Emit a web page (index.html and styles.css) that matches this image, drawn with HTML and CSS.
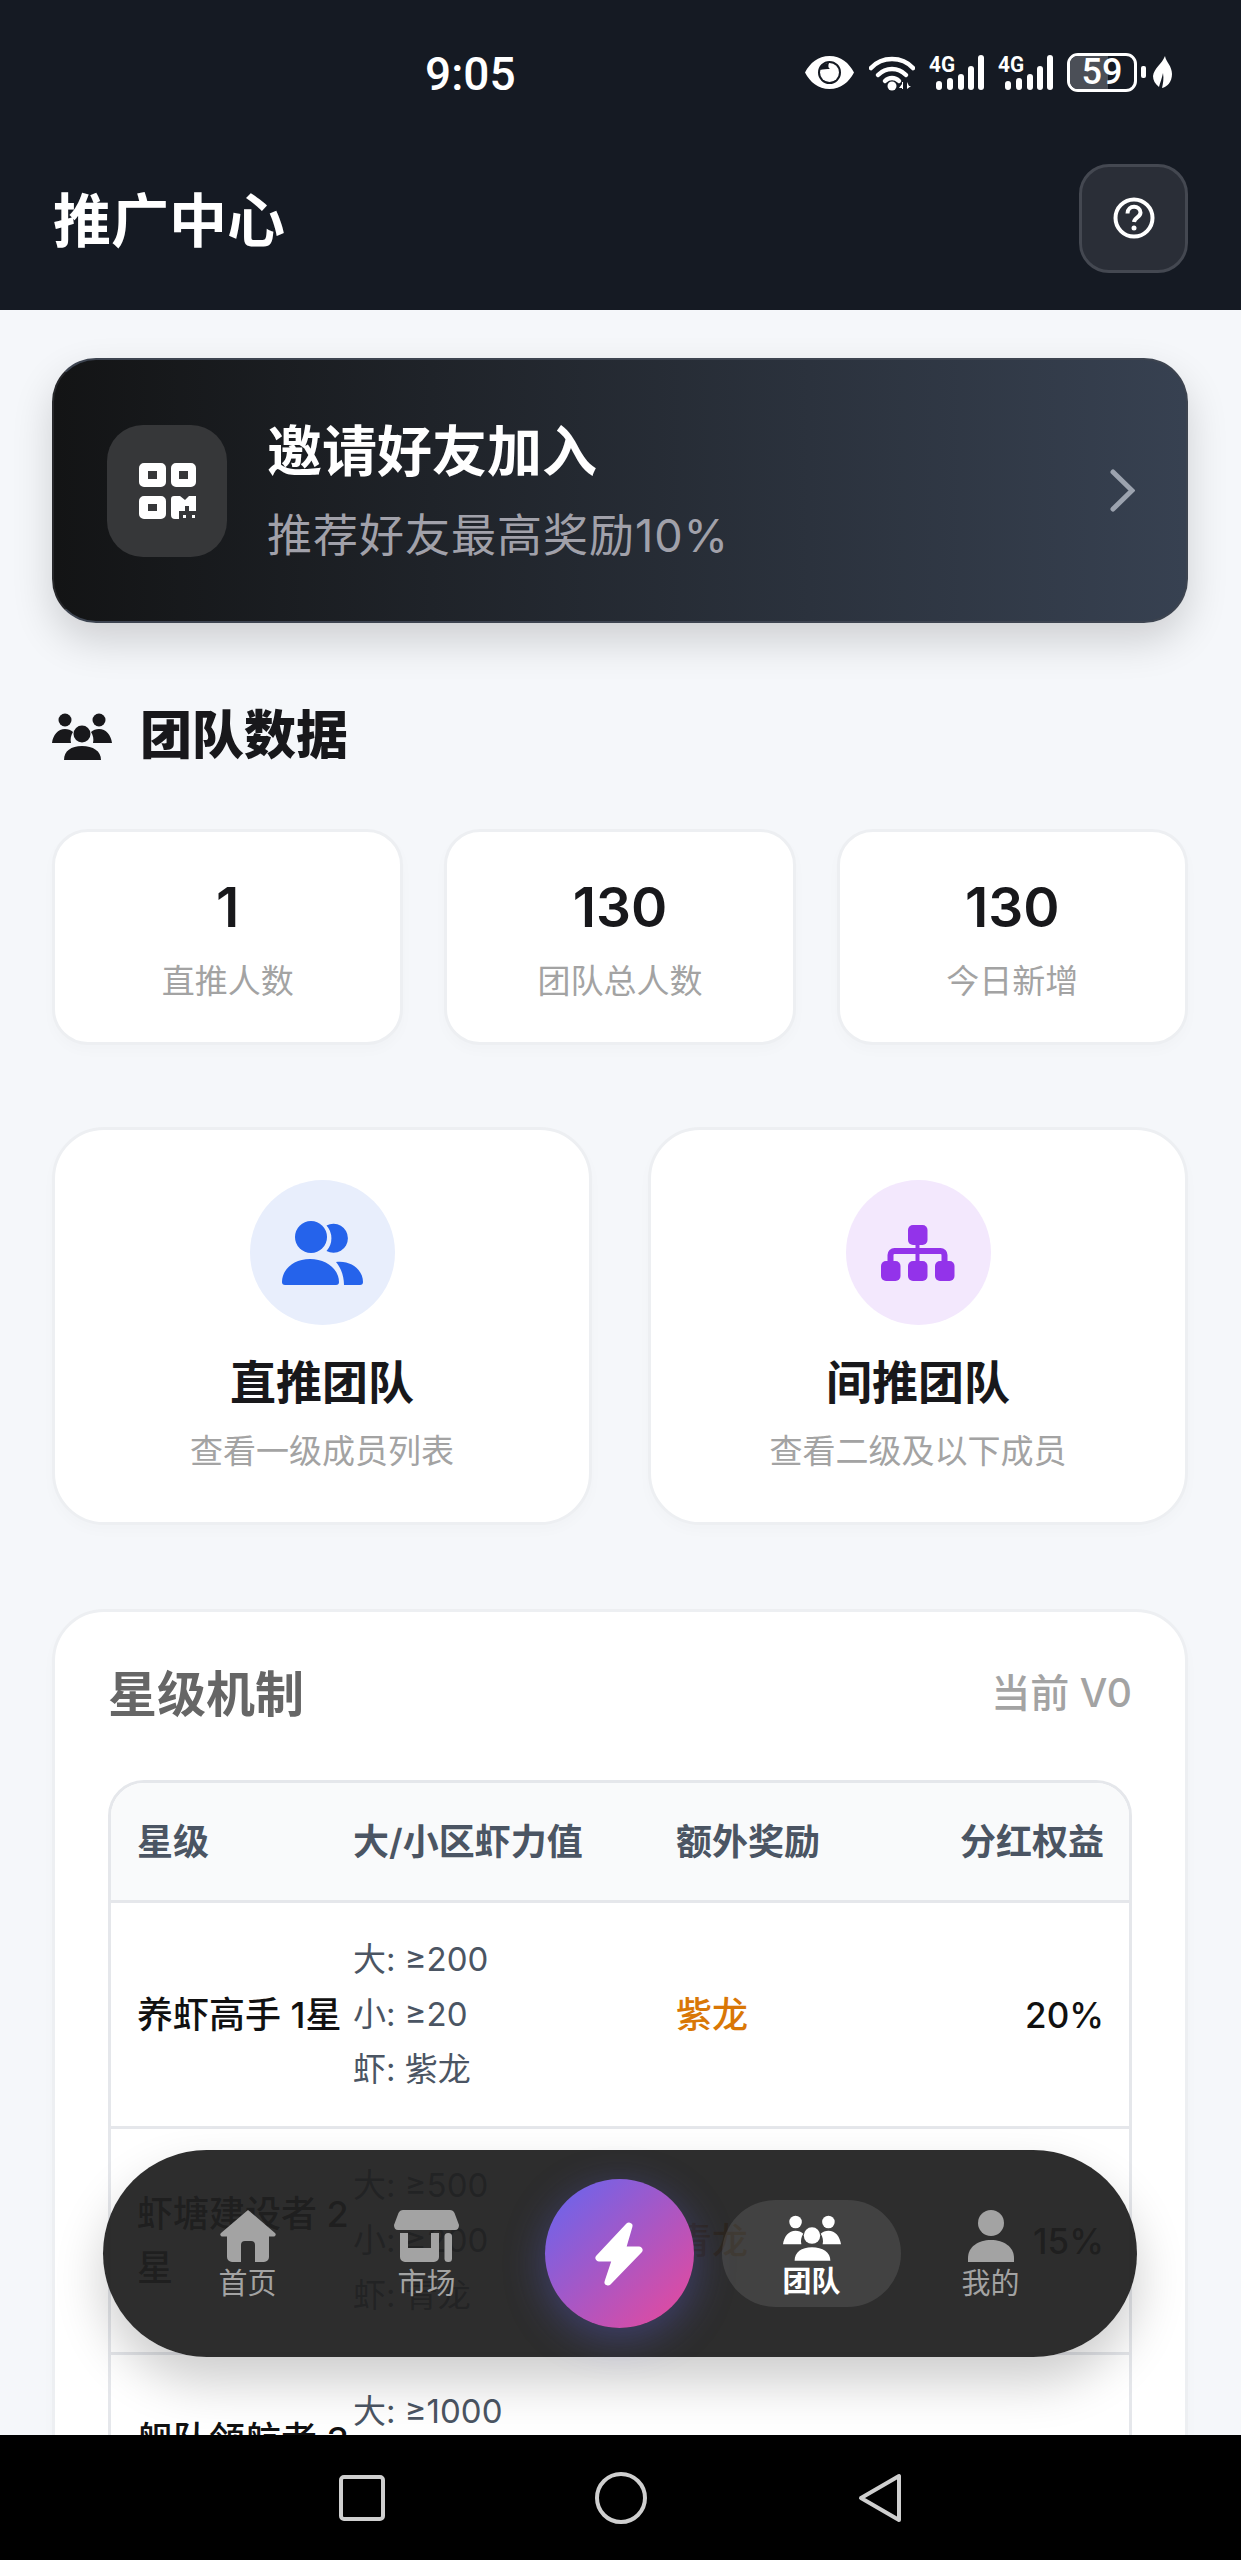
FILE: index.html
```html
<!DOCTYPE html>
<html lang="zh-CN">
<head>
    <meta charset="UTF-8">
    <meta name="viewport" content="width=device-width, initial-scale=1.0">
    <title>推广中心</title>
    <link rel="stylesheet" href="styles.css">
</head>
<body>
    <svg class="defs" width="0" height="0">
        <symbol id="icon-group" viewBox="0 0 60 47">
            <circle cx="13" cy="7" r="6.5"/>
            <circle cx="47" cy="7" r="6.5"/>
            <circle cx="30" cy="21" r="8.5"/>
            <path d="M0 30C1 22 6 16 13 16c3 0 6 1 8 3-2 3-3 7-2 11z"/>
            <path d="M60 30C59 22 54 16 47 16c-3 0-6 1-8 3 2 3 3 7 2 11z"/>
            <path d="M12 47c0-9 7-14 18-14s19 5 19 14z"/>
        </symbol>
    </svg>

    <div class="screen">
        <header class="top">
            <div class="status-bar">
                <span class="clock">9:05</span>
                <div class="status-icons">
                    <svg class="ic-eye" viewBox="0 0 49 33">
                        <path fill-rule="evenodd" d="M24.5 0C36 0 44 7 49 16.500 44 26 36 33 24.500 33S5 26 0 16.500C5 7 13 0 24.500 0zM24.500 5a11.500 11.500 0 1 0 0 23 11.500 11.500 0 0 0 0-23z"/>
                        <circle cx="24.500" cy="16.500" r="9.500"/>
                        <path class="cut" d="M15 14c1-5 5-7 9-7-1 2-1 5 1 6-3 0-7 0-10 1z"/>
                    </svg>
                    <svg class="ic-wifi" viewBox="0 0 46 37">
                        <path class="arc" d="M2 14C13 2 33 2 44 14"/>
                        <path class="arc" d="M9 21c8-8 20-8 28 0"/>
                        <path class="arc" d="M16 27c4-4 10-4 14 0"/>
                        <circle cx="23" cy="32" r="4.500"/>
                        <path d="M33 30l-3 4h3zM33 35h1v-7h-1zM38 28v7l4-3-2 0z"/>
                    </svg>
                    <svg class="ic-signal" viewBox="0 0 55 37">
                        <text class="net" x="0" y="18" textLength="26" lengthAdjust="spacingAndGlyphs">4G</text>
                        <rect x="7" y="27" width="6" height="9" rx="3"/>
                        <rect x="18" y="24" width="6" height="12" rx="3"/>
                        <rect x="29" y="20" width="6" height="16" rx="3"/>
                        <rect x="39" y="12" width="6" height="24" rx="3"/>
                        <rect x="49" y="1" width="6" height="35" rx="3"/>
                    </svg>
                    <svg class="ic-signal" viewBox="0 0 55 37">
                        <text class="net" x="0" y="18" textLength="26" lengthAdjust="spacingAndGlyphs">4G</text>
                        <rect x="7" y="27" width="6" height="9" rx="3"/>
                        <rect x="18" y="24" width="6" height="12" rx="3"/>
                        <rect x="29" y="20" width="6" height="16" rx="3"/>
                        <rect x="39" y="12" width="6" height="24" rx="3"/>
                        <rect x="49" y="1" width="6" height="35" rx="3"/>
                    </svg>
                    <div class="battery">
                        <div class="battery-fill"></div>
                        <span class="battery-num">59</span>
                    </div>
                    <div class="battery-tip"></div>
                    <svg class="ic-leaf" viewBox="0 0 19 32">
                        <path d="M12 0c1 6 7 10 7 18 0 8-5 13-10 14 1-5 2-9 1-15-1 5-3 10-4 14C2 28 0 24 0 20 1 12 9 8 12 0z"/>
                    </svg>
                </div>
            </div>
            <div class="title-row">
                <h1>推广中心</h1>
                <button class="help-btn">
                    <svg viewBox="0 0 42 42">
                        <circle class="ring" cx="21" cy="21" r="18.500"/>
                        <path class="ring" d="M14.500 16.500c0-9 13-8.500 13-1 0 5-6 4.500-6.500 9.500"/>
                        <circle cx="21" cy="31" r="2.500"/>
                    </svg>
                </button>
            </div>
        </header>

        <main class="content">
            <section class="invite">
                <div class="invite-icon">
                    <svg viewBox="0 0 57 56">
                        <path fill-rule="evenodd" d="M5 0h17a5 5 0 0 1 5 5v14a5 5 0 0 1-5 5H5a5 5 0 0 1-5-5V5a5 5 0 0 1 5-5zM9 8v8h9V8z"/>
                        <path fill-rule="evenodd" d="M37 0h15a5 5 0 0 1 5 5v14a5 5 0 0 1-5 5H37a5 5 0 0 1-5-5V5a5 5 0 0 1 5-5zM40 8v8h9V8z"/>
                        <path fill-rule="evenodd" d="M5 33h17a5 5 0 0 1 5 5v13a5 5 0 0 1-5 5H5a5 5 0 0 1-5-5V38a5 5 0 0 1 5-5zM9 41v7h9v-7z"/>
                        <path d="M35 33h6l5 4 4-4h7v15h-7v-5h-4v5h-6v8h-4a4 4 0 0 1-4-4V36a3 3 0 0 1 3-3z"/>
                        <rect x="44" y="52" width="3" height="3"/>
                        <rect x="53" y="52" width="3" height="3"/>
                    </svg>
                </div>
                <div class="invite-text">
                    <div class="invite-title">邀请好友加入</div>
                    <div class="invite-sub">推荐好友最高奖励10%</div>
                </div>
                <svg class="chevron" viewBox="0 0 25 43"><path d="M3 3l19 18.500L3 40"/></svg>
            </section>

            <h2 class="section-title">
                <svg class="ic-section"><use href="#icon-group"/></svg>
                团队数据
            </h2>

            <section class="stats">
                <div class="stat-card">
                    <div class="stat-value">1</div>
                    <div class="stat-label">直推人数</div>
                </div>
                <div class="stat-card">
                    <div class="stat-value">130</div>
                    <div class="stat-label">团队总人数</div>
                </div>
                <div class="stat-card">
                    <div class="stat-value">130</div>
                    <div class="stat-label">今日新增</div>
                </div>
            </section>

            <section class="actions">
                <div class="action-card">
                    <div class="action-circle blue">
                        <svg class="ic-direct" viewBox="0 0 81 64">
                            <circle cx="29" cy="16" r="16"/>
                            <path d="M44.500 4.500A14.500 14.500 0 1 1 44.500 30 19 19 0 0 0 44.500 4.500z"/>
                            <path d="M3 64a3 3 0 0 1-3-3C0 48 12 38 28 38s29 10 29 23a3 3 0 0 1-3 3z"/>
                            <path d="M54 41c15-2 27 8 27 20a3 3 0 0 1-3 3H62c0-9-3-17-8-23z"/>
                        </svg>
                    </div>
                    <div class="action-title">直推团队</div>
                    <div class="action-sub">查看一级成员列表</div>
                </div>
                <div class="action-card">
                    <div class="action-circle purple">
                        <svg class="ic-org" viewBox="0 0 74 56">
                            <rect x="27" y="0" width="19.500" height="20" rx="5"/>
                            <rect x="34.500" y="18" width="4" height="20"/>
                            <path class="org-line" d="M9.500 38v-8a4 4 0 0 1 4-4h46a4 4 0 0 1 4 4v8"/>
                            <rect x="0" y="36" width="19.500" height="20" rx="5"/>
                            <rect x="27" y="36" width="19.500" height="20" rx="5"/>
                            <rect x="54" y="36" width="19.500" height="20" rx="5"/>
                        </svg>
                    </div>
                    <div class="action-title">间推团队</div>
                    <div class="action-sub">查看二级及以下成员</div>
                </div>
            </section>

            <section class="star-card">
                <div class="star-head">
                    <h2>星级机制</h2>
                    <span class="star-current">当前 V0</span>
                </div>
                <div class="table-wrap">
                    <table class="star-table">
                        <colgroup>
                            <col class="col-name"><col class="col-value"><col class="col-reward"><col>
                        </colgroup>
                        <thead>
                            <tr><th>星级</th><th class="tight">大/小区虾力值</th><th>额外奖励</th><th class="right">分红权益</th></tr>
                        </thead>
                        <tbody>
                            <tr>
                                <td class="name">养虾高手 1星</td>
                                <td class="req"><div>大: ≥200</div><div>小: ≥20</div><div>虾: 紫龙</div></td>
                                <td class="reward">紫龙</td>
                                <td class="share right">20%</td>
                            </tr>
                            <tr>
                                <td class="name">虾塘建设者 2星</td>
                                <td class="req"><div>大: ≥500</div><div>小: ≥200</div><div>虾: 青龙</div></td>
                                <td class="reward">青龙</td>
                                <td class="share right">15%</td>
                            </tr>
                            <tr>
                                <td class="name">舰队领航者 3星</td>
                                <td class="req"><div>大: ≥1000</div><div>小: ≥300</div><div>虾: 青龙</div></td>
                                <td class="reward">青龙</td>
                                <td class="share right">10%</td>
                            </tr>
                        </tbody>
                    </table>
                </div>
            </section>
        </main>

        <nav class="tabbar">
            <div class="tab">
                <svg class="ic-home" viewBox="0 0 58 52">
                    <path d="M29 0l27 23a2 2 0 0 1-1.500 3.500H50V47a5 5 0 0 1-5 5h-9V35a4 4 0 0 0-4-4h-6a4 4 0 0 0-4 4v17h-9a5 5 0 0 1-5-5V26.500H3.500A2 2 0 0 1 2 23z"/>
                </svg>
                <span>首页</span>
            </div>
            <div class="tab">
                <svg class="ic-shop" viewBox="0 0 65 52">
                    <path d="M9 0h47q3 0 4.500 3L65 15q0 5-4 5H4q-4 0-4-5L4.500 3Q6 0 9 0z"/>
                    <path d="M6 23h8v15h23V23h8v24a5 5 0 0 1-5 5H11a5 5 0 0 1-5-5z"/>
                    <rect x="50.500" y="23" width="7.500" height="29" rx="3.500"/>
                </svg>
                <span>市场</span>
            </div>
            <div class="tab-center">
                <div class="fab">
                    <svg viewBox="0 0 50 66">
                        <path d="M35 5L5 37h17l-8 24 31-32H28z"/>
                    </svg>
                </div>
            </div>
            <div class="tab active">
                <svg class="ic-team"><use href="#icon-group"/></svg>
                <span>团队</span>
            </div>
            <div class="tab">
                <svg class="ic-me" viewBox="0 0 46 52">
                    <circle cx="23" cy="13" r="13"/>
                    <path d="M0 52V48C0 37 10 30 23 30s23 7 23 18v4z"/>
                </svg>
                <span>我的</span>
            </div>
        </nav>

        <footer class="sys-nav">
            <svg class="sys-square" viewBox="0 0 46 46"><rect x="2" y="2" width="42" height="42" rx="3"/></svg>
            <svg class="sys-circle" viewBox="0 0 52 52"><circle cx="26" cy="26" r="24"/></svg>
            <svg class="sys-back" viewBox="0 0 44 50"><path d="M41 3v44L3 25z"/></svg>
        </footer>
    </div>
</body>
</html>
```

FILE: styles.css
```css
* {
    box-sizing: border-box;
}
body {
    margin: 0;
    font-family: Inter, "Noto Sans CJK SC", sans-serif;
    color: #18181b;
    background-color: #f5f7fa;
}
h1, h2 {
    margin: 0;
}
.defs {
    position: absolute;
}
.screen {
    position: relative;
    width: 1241px;
    height: 2560px;
    display: flex;
    flex-direction: column;
    overflow: hidden;
}

/* top bar */
.top {
    height: 310px;
    flex-shrink: 0;
    background-color: #151a23;
    color: white;
}
.status-bar {
    height: 144px;
    display: flex;
    align-items: center;
    padding: 0 69px 0 425px;
}
.clock {
    margin-top: 3px;
    font-family: Roboto, "Noto Sans CJK SC", sans-serif;
    font-size: 46px;
    font-weight: 500;
}
.status-icons {
    margin-left: auto;
    display: flex;
    align-items: center;
    fill: white;
}
.ic-eye {
    width: 49px;
    height: 33px;
}
.ic-eye .cut {
    fill: #151a23;
}
.ic-wifi {
    width: 46px;
    height: 37px;
    margin-left: 15px;
}
.ic-wifi .arc {
    fill: none;
    stroke: white;
    stroke-width: 4.5;
    stroke-linecap: round;
}
.ic-signal {
    width: 55px;
    height: 37px;
    margin-left: 14px;
}
.net {
    font-family: Roboto, sans-serif;
    font-size: 22px;
    font-weight: 700;
}
.battery {
    position: relative;
    width: 70px;
    height: 39px;
    margin-left: 14px;
    border: 3px solid white;
    border-radius: 11px;
    display: flex;
    align-items: center;
    justify-content: center;
}
.battery-fill {
    position: absolute;
    left: 0;
    top: 0;
    bottom: 0;
    width: 59%;
    background-color: #4b4f57;
    border-radius: 8px 0 0 8px;
}
.battery-num {
    position: relative;
    font-family: Roboto, sans-serif;
    font-size: 36px;
    line-height: 33px;
    font-weight: 500;
}
.battery-tip {
    width: 5px;
    height: 12px;
    margin-left: 4px;
    background-color: white;
    border-radius: 2px;
}
.ic-leaf {
    width: 19px;
    height: 32px;
    margin-left: 7px;
}
.title-row {
    height: 148px;
    display: flex;
    align-items: center;
    justify-content: space-between;
    padding: 0 53px;
}
h1 {
    margin-bottom: 3px;
    font-size: 58px;
    font-weight: 700;
}
.help-btn {
    width: 109px;
    height: 109px;
    padding: 0;
    background-color: #2a2e37;
    border: 3px solid #444851;
    border-radius: 30px;
    display: flex;
    align-items: center;
    justify-content: center;
    fill: white;
}
.help-btn svg {
    width: 42px;
    height: 42px;
}
.help-btn .ring {
    fill: none;
    stroke: white;
    stroke-width: 4;
}

/* page content */
.content {
    flex: 1;
    min-height: 0;
    overflow: hidden;
    padding: 48px 53px 0 52px;
}
.invite {
    height: 265px;
    display: flex;
    align-items: center;
    padding: 0 51px 0 53px;
    background: linear-gradient(90deg, #131415, #374151);
    border: 2px solid #3d4450;
    border-left-color: #26272a;
    border-radius: 44px;
    box-shadow: 0 18px 40px rgba(0, 0, 0, 0.16);
}
.invite-icon {
    width: 120px;
    height: 132px;
    flex-shrink: 0;
    display: flex;
    align-items: center;
    justify-content: center;
    background-color: #363739;
    border-radius: 36px;
}
.invite-icon svg {
    width: 57px;
    height: 56px;
    fill: white;
}
.invite-text {
    flex: 1;
    margin-left: 40px;
}
.invite-title {
    font-size: 55px;
    line-height: 66px;
    font-weight: 700;
    color: white;
}
.invite-sub {
    margin-top: 25px;
    font-size: 45px;
    line-height: 54px;
    letter-spacing: 1px;
    color: #a1a1aa;
}
.chevron {
    width: 25px;
    height: 43px;
    fill: none;
    stroke: #9ca3af;
    stroke-width: 5;
    stroke-linecap: round;
}
.section-title {
    display: flex;
    align-items: center;
    margin-top: 83px;
    font-size: 52px;
    line-height: 60px;
    font-weight: 800;
}
.ic-section {
    width: 60px;
    height: 47px;
    margin-right: 28px;
    fill: #18181b;
}
.stats {
    display: grid;
    grid-template-columns: repeat(3, 1fr);
    gap: 41px;
    margin-top: 63px;
}
.stat-card, .action-card, .star-card {
    background-color: white;
    border: 3px solid #edeff2;
    box-shadow: 0 6px 14px rgba(0, 0, 0, 0.02);
}
.stat-card {
    height: 216px;
    border-radius: 36px;
    padding-top: 42px;
    text-align: center;
}
.stat-value {
    font-size: 55px;
    line-height: 66px;
    font-weight: 600;
}
.stat-label {
    margin-top: 21px;
    font-size: 33px;
    line-height: 40px;
    color: #a3a3a3;
}
.actions {
    display: grid;
    grid-template-columns: 1fr 1fr;
    gap: 56px;
    margin-top: 82px;
}
.action-card {
    height: 398px;
    border-radius: 52px;
    padding-top: 50px;
    display: flex;
    flex-direction: column;
    align-items: center;
}
.action-circle {
    width: 145px;
    height: 145px;
    border-radius: 50%;
    display: flex;
    align-items: center;
    justify-content: center;
}
.action-circle.blue {
    background-color: #e8eefc;
    fill: #2563eb;
}
.action-circle.purple {
    background-color: #f3e8fd;
    fill: #9333ea;
}
.ic-direct {
    width: 81px;
    height: 64px;
}
.ic-org {
    width: 74px;
    height: 56px;
}
.org-line {
    fill: none;
    stroke: #9333ea;
    stroke-width: 6;
}
.action-title {
    margin-top: 30px;
    font-size: 46px;
    line-height: 54px;
    font-weight: 700;
}
.action-sub {
    margin-top: 20px;
    font-size: 33px;
    line-height: 44px;
    color: #a3a3a3;
}

/* star table */
.star-card {
    margin-top: 84px;
    padding: 50px 53px 0;
    border-radius: 52px;
}
.star-head {
    display: flex;
    align-items: center;
    justify-content: space-between;
    height: 56px;
}
.star-head h2 {
    font-size: 49px;
    font-weight: 700;
    color: #666;
}
.star-current {
    font-size: 39px;
    font-weight: 500;
    color: #a3a3a3;
}
.table-wrap {
    margin-top: 62px;
    border: 3px solid #e5e7eb;
    border-radius: 36px;
    overflow: hidden;
}
.star-table {
    width: 100%;
    table-layout: fixed;
    border-collapse: separate;
    border-spacing: 0;
}
.col-name {
    width: 239px;
}
.col-value {
    width: 300px;
}
.col-reward {
    width: 271px;
}
.star-table th {
    height: 120px;
    padding: 0 25px 6px 26px;
    font-size: 36px;
    font-weight: 600;
    text-align: left;
    color: #4b5563;
    background-color: #f9fafb;
    border-bottom: 3px solid #e5e7eb;
}
.star-table th.tight {
    padding-left: 3px;
}
.star-table td {
    padding: 29px 25px 29px 26px;
    font-size: 36px;
    line-height: 54px;
    border-bottom: 3px solid #e5e7eb;
}
.star-table td.name {
    padding-right: 0;
    font-weight: 500;
    color: #111;
}
.star-table td.req {
    padding-left: 3px;
    font-size: 33px;
    line-height: 55px;
    color: #4b5563;
}
.star-table td.reward {
    font-weight: 500;
    color: #d97706;
}
.star-table td.share {
    font-size: 35px;
    font-weight: 500;
    color: #111;
}
.star-table .right {
    text-align: right;
}

/* floating tab bar */
.tabbar {
    position: absolute;
    left: 103px;
    top: 2150px;
    width: 1034px;
    height: 207px;
    padding: 0 55px;
    display: flex;
    align-items: center;
    background-color: rgba(32, 32, 32, 0.94);
    border-radius: 104px;
    box-shadow: 0 25px 50px rgba(0, 0, 0, 0.2);
}
.tab {
    width: 179px;
    height: 107px;
    display: flex;
    flex-direction: column;
    align-items: center;
    fill: #a3a3a3;
    color: #a3a3a3;
    font-size: 29px;
    line-height: 36px;
}
.tab svg {
    display: block;
    height: 52px;
    margin-top: 10px;
    margin-bottom: 4px;
}
.ic-home {
    width: 58px;
}
.ic-shop {
    width: 65px;
}
.ic-me {
    width: 46px;
}
.tab .ic-team {
    width: 58px;
    height: 46px;
    margin-top: 15px;
    margin-bottom: 3px;
}
.tab.active {
    background-color: rgba(255, 255, 255, 0.1);
    border-radius: 54px;
    fill: white;
    color: white;
    font-weight: 700;
}
.tab-center {
    width: 206px;
    display: flex;
    justify-content: center;
}
.fab {
    width: 149px;
    height: 149px;
    border-radius: 50%;
    display: flex;
    align-items: center;
    justify-content: center;
    background: linear-gradient(135deg, #6366f1, #ec4899);
    box-shadow: 0 10px 40px rgba(99, 102, 241, 0.35);
}
.fab svg {
    width: 50px;
    height: 66px;
    fill: white;
    stroke: white;
    stroke-width: 7;
    stroke-linejoin: round;
}

/* android nav */
.sys-nav {
    height: 125px;
    flex-shrink: 0;
    position: relative;
    background-color: black;
    display: flex;
    align-items: center;
    padding-left: 339px;
    fill: none;
    stroke: #cfcfcf;
    stroke-width: 4;
    stroke-linejoin: round;
}
.sys-square {
    width: 46px;
    height: 46px;
}
.sys-circle {
    width: 52px;
    height: 52px;
    margin-left: 210px;
}
.sys-back {
    width: 44px;
    height: 50px;
    margin-left: 211px;
}
```
